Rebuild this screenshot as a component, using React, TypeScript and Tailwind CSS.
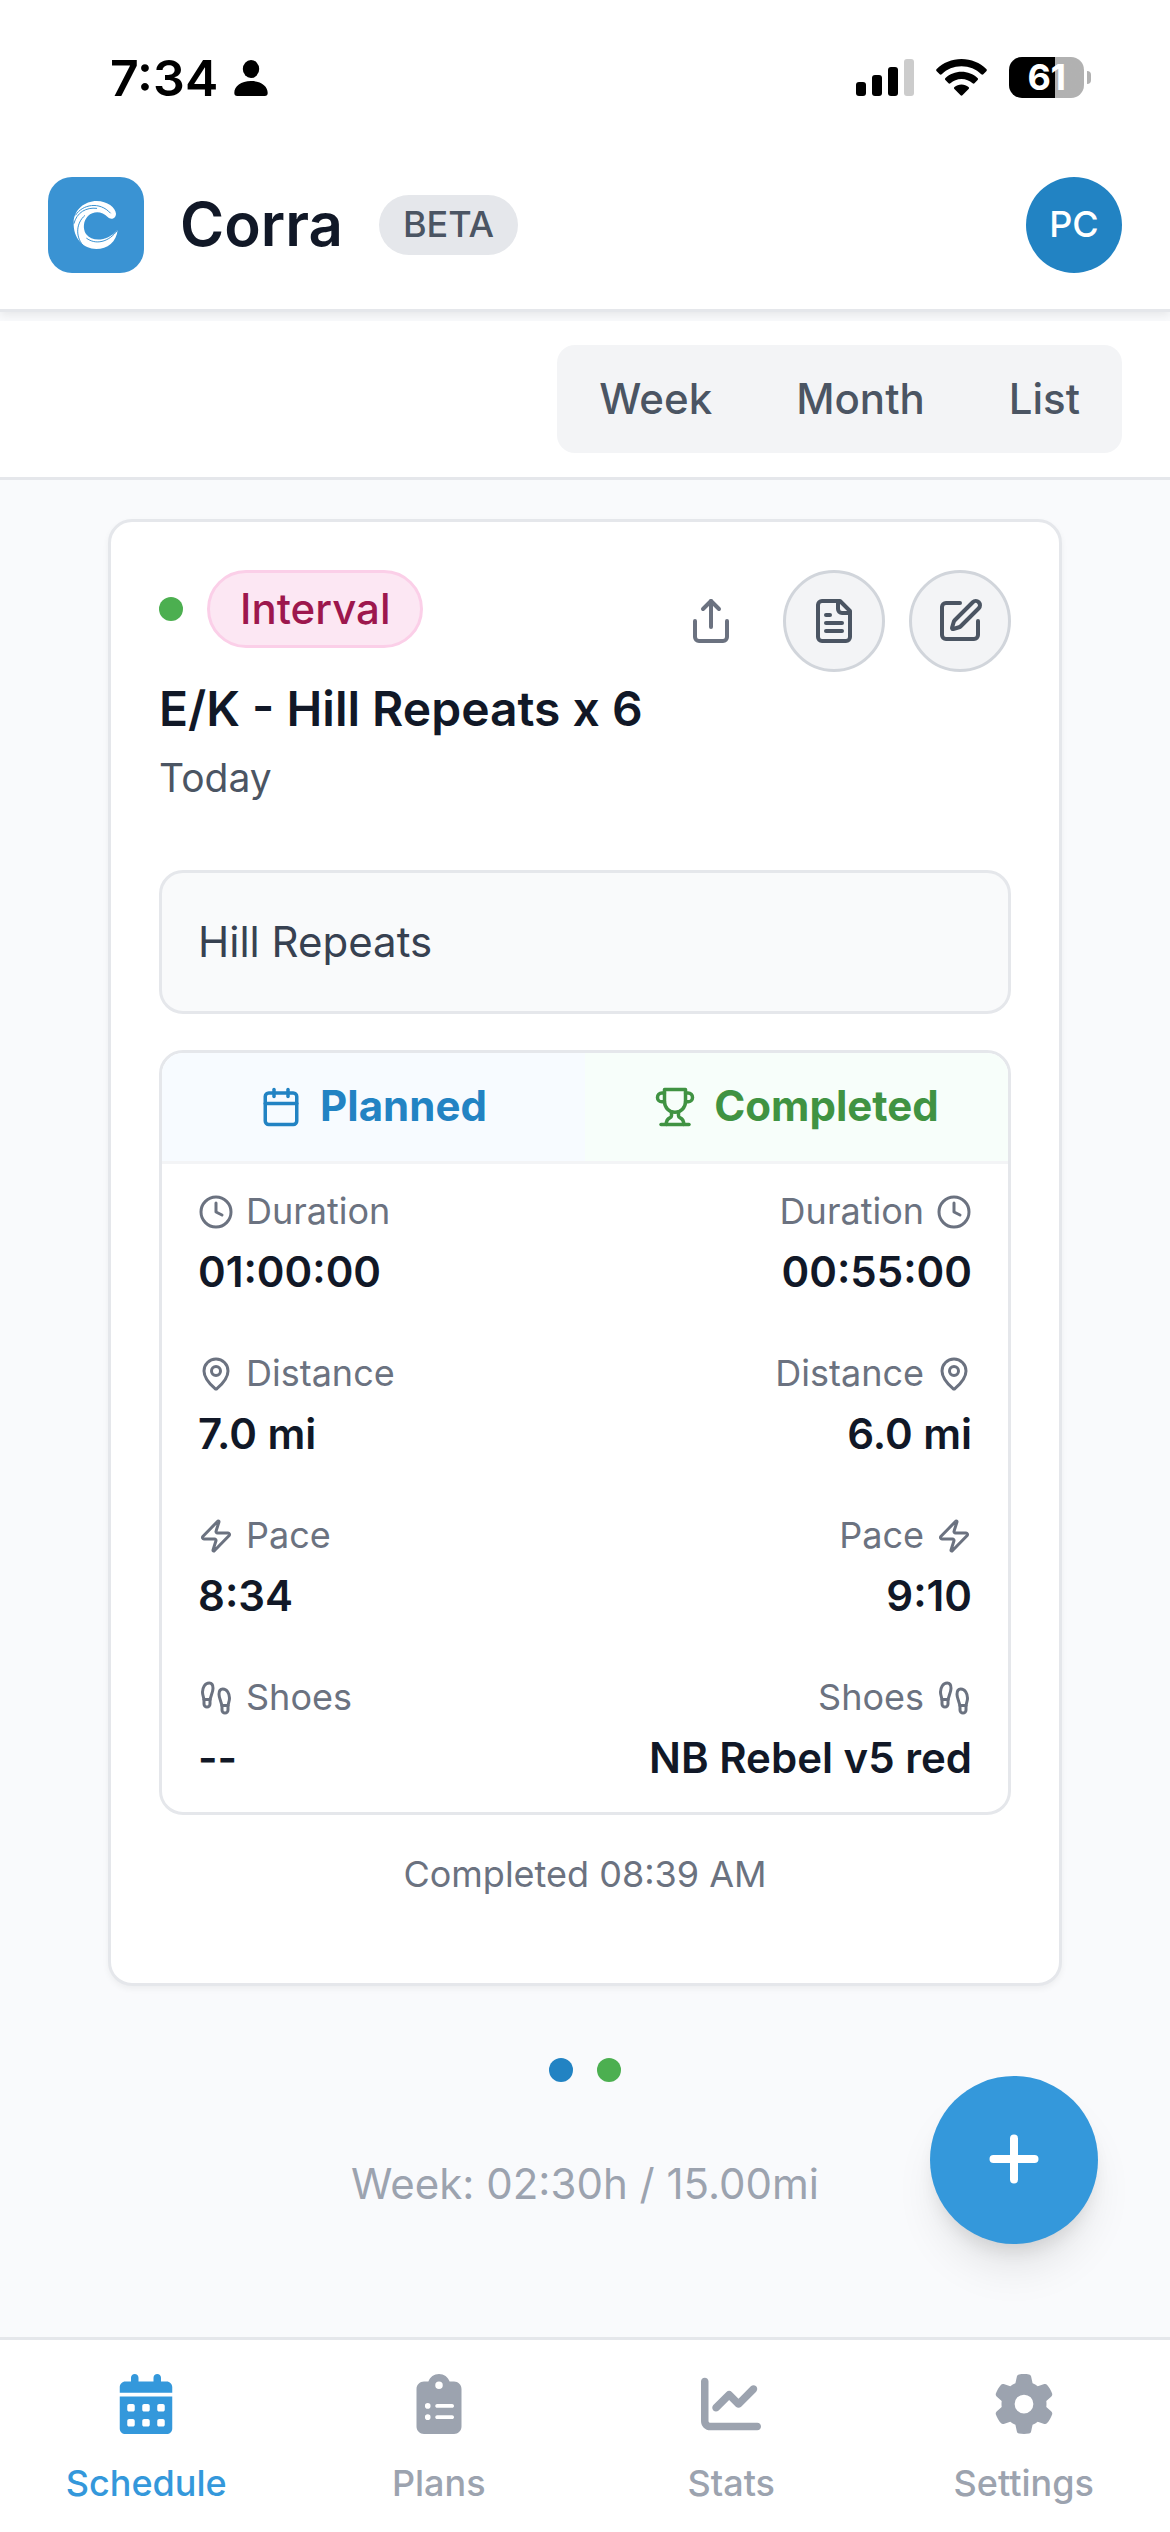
import React from "react";
import { Calendar, Clock, Footprints, MapPin, Zap } from "lucide-react";
import { FaCalendarDays, FaChartLine, FaClipboardList, FaGear } from "react-icons/fa6";

const metrics = [
  { label: "Duration", icon: Clock, planned: "01:00:00", completed: "00:55:00" },
  { label: "Distance", icon: MapPin, planned: "7.0 mi", completed: "6.0 mi" },
  { label: "Pace", icon: Zap, planned: "8:34", completed: "9:10" },
  { label: "Shoes", icon: Footprints, planned: "--", completed: "NB Rebel v5 red" }
];

const tabs = [
  { label: "Schedule", icon: FaCalendarDays, active: true },
  { label: "Plans", icon: FaClipboardList, active: false },
  { label: "Stats", icon: FaChartLine, active: false },
  { label: "Settings", icon: FaGear, active: false }
];

function StrokeIcon({ className, children }: { className: string; children: React.ReactNode }) {
  return (
    <svg
      viewBox="0 0 24 24"
      fill="none"
      stroke="currentColor"
      strokeWidth={2}
      strokeLinecap="round"
      strokeLinejoin="round"
      className={className}
    >
      {children}
    </svg>
  );
}

function StatusBar() {
  return (
    <div className="relative z-10 h-[141px] shrink-0 bg-white flex items-start justify-between pl-[110px] pr-[79px] text-black">
      <div className="flex items-center gap-[16px] pt-[48px] h-[108px]">
        <span className="text-[50px] leading-[60px] font-semibold">7:34</span>
        <svg viewBox="0 0 34 36" className="w-[34px] h-[36px]">
          <ellipse cx="17" cy="9" rx="8.2" ry="9" />
          <path d="M0.3 33C0.3 26 7 21 17 21s16.700 5 16.700 12c0 2-1 3-3 3H3.300c-2 0-3-1-3-3Z" />
        </svg>
      </div>
      <div className="flex items-center h-[41px] mt-[57px]">
        <svg viewBox="0 0 58 37" className="w-[58px] h-[37px]">
          <rect x="0" y="23" width="10" height="14" rx="3" />
          <rect x="16" y="16" width="10" height="21" rx="3" />
          <rect x="32" y="8" width="10" height="29" rx="3" />
          <rect x="48" y="0" width="10" height="37" rx="3" fill="#cccccc" />
        </svg>
        <svg viewBox="0 0 51 37" className="w-[51px] h-[37px] ml-[22px]">
          <path d="M25.500 0C15.800 0 7 3.800 0.700 10c-.7.700-.7 1.500 0 2.200l3 3c.6.600 1.400.6 2 0C10.900 10.200 17.800 7.300 25.500 7.300s14.600 2.900 19.800 7.900c.6.600 1.400.6 2 0l3-3c.7-.7.700-1.500 0-2.200C44 3.800 35.200 0 25.500 0Z" />
          <path d="M25.500 12.800c-6.200 0-11.800 2.300-16 6.200-.7.600-.7 1.500-.1 2.100l3.100 3.100c.6.600 1.300.6 1.900.1 3-2.600 6.800-4.200 11.100-4.200s8.100 1.600 11.100 4.200c.6.500 1.300.5 1.900-.1l3.100-3.100c.6-.6.600-1.500-.1-2.100-4.200-3.900-9.800-6.200-16-6.200Z" />
          <path d="M25.500 25.500c-2.700 0-5.100.9-7 2.500-.7.600-.7 1.400-.1 2l6.200 6.300c.6.600 1.200.6 1.800 0l6.200-6.300c.6-.6.600-1.400-.1-2-1.900-1.600-4.300-2.500-7-2.500Z" />
        </svg>
        <div className="ml-[22px] w-[75px] h-[41px] rounded-[13px] bg-linear-to-r from-black from-[61%] to-[#b1b1b1] to-[61%] flex items-center justify-center">
          <span className="text-[36px] leading-[41px] font-bold text-white tracking-[-0.5px]">61</span>
        </div>
        <div className="ml-[3px] w-[4px] h-[13px] rounded-r-full bg-[#b1b1b1]" />
      </div>
    </div>
  );
}

function Logo() {
  return (
    <svg viewBox="12 12 288 288" className="w-24 h-24 rounded-[24px] bg-[#3a93d3]" fill="none">
      <path
        fill="#fff"
        d="M89 148C90 110 122 84 158 84c32 0 57 20 58 38 0 14-15 20-25 10-16-17-42-19-59-3-14 14-16 38-6 54 20 25 64 23 95-13-3 36-31 58-64 58-39 0-70-32-68-80Z"
      />
      <g stroke="#3a93d3" strokeLinecap="round" strokeWidth="3">
        <path d="M95 126c20-32 72-42 104-6" />
        <path d="M90 151c8-32 36-49 68-45" />
        <path d="M122 128c-26 22-28 62-6 88" />
        <path d="M128 196c26 20 66 13 92-24" />
      </g>
    </svg>
  );
}

function Header() {
  return (
    <header className="h-[171px] shrink-0 bg-white border-b-[3px] border-gray-200 shadow-[0_3px_9px_rgba(0,0,0,0.08)] px-12 flex items-center justify-between">
      <div className="flex items-center">
        <Logo />
        <span className="ml-9 pb-[2px] text-[60px] leading-[72px] font-semibold text-[#111827]">Corra</span>
        <span className="ml-9 h-[60px] px-6 rounded-full bg-[#e5e7eb] text-[#4b5563] text-[36px] leading-[58px] font-medium">
          BETA
        </span>
      </div>
      <div className="w-24 h-24 pb-[2px] rounded-full bg-[#2283c3] text-white text-[36px] font-medium flex items-center justify-center">
        PC
      </div>
    </header>
  );
}

function ViewSwitch() {
  return (
    <div className="mt-[9px] h-[159px] shrink-0 bg-white border-b-[3px] border-gray-200 px-12 flex items-center justify-end">
      <div className="h-[108px] rounded-[18px] bg-[#f3f4f6] px-[6px] pb-[2px] flex items-center text-[42px] font-medium text-[#4b5563]">
        <button className="px-9">Week</button>
        <button className="px-[48px]">Month</button>
        <button className="px-9">List</button>
      </div>
    </div>
  );
}

function WorkoutCard() {
  return (
    <section className="mx-[108px] mt-[39px] h-[1467px] shrink-0 bg-white border-[3px] border-gray-200 rounded-[24px] shadow-[0_3px_6px_rgba(0,0,0,0.05)] p-12">
      <div className="flex items-start justify-between h-[102px]">
        <div className="flex items-center gap-6">
          <span className="w-6 h-6 rounded-full bg-[#4caf50]" />
          <span className="h-[78px] px-[30px] rounded-full border-[3px] border-[#fbcfe8] bg-[#fce7f3] text-[#9d174d] text-[42px] leading-[72px] font-medium">
            Interval
          </span>
        </div>
        <div className="flex items-center">
          <button className="w-24 h-24 flex items-center justify-center text-[#6b7280]">
            <StrokeIcon className="w-12 h-12">
              <path d="M4 12v8a2 2 0 0 0 2 2h12a2 2 0 0 0 2-2v-8" />
              <path d="m16 6-4-4-4 4" />
              <path d="M12 2v13" />
            </StrokeIcon>
          </button>
          <button className="ml-6 w-[102px] h-[102px] rounded-full border-[3px] border-[#d1d5db] bg-[#f3f4f6] text-[#4b5563] flex items-center justify-center">
            <StrokeIcon className="w-12 h-12">
              <path d="M15 2H6a2 2 0 0 0-2 2v16a2 2 0 0 0 2 2h12a2 2 0 0 0 2-2V7Z" />
              <path d="M14 2v4a2 2 0 0 0 2 2h4" />
              <path d="M10 9H8" />
              <path d="M16 13H8" />
              <path d="M16 17H8" />
            </StrokeIcon>
          </button>
          <button className="ml-6 w-[102px] h-[102px] rounded-full border-[3px] border-[#d1d5db] bg-[#f3f4f6] text-[#4b5563] flex items-center justify-center">
            <StrokeIcon className="w-12 h-12">
              <path d="M12 3H5a2 2 0 0 0-2 2v14a2 2 0 0 0 2 2h14a2 2 0 0 0 2-2v-7" />
              <path d="M18.375 2.625a1 1 0 0 1 3 3l-9.013 9.014a2 2 0 0 1-.853.505l-2.873.84a.5.5 0 0 1-.62-.62l.84-2.873a2 2 0 0 1 .506-.852z" />
            </StrokeIcon>
          </button>
        </div>
      </div>

      <h2 className="mt-[7px] text-[48px] leading-[60px] font-semibold text-[#111827]">E/K - Hill Repeats x 6</h2>
      <p className="mt-[9px] text-[39px] leading-[60px] text-[#4b5563]">Today</p>

      <div className="mt-[62px] h-[144px] rounded-[24px] border-[3px] border-gray-200 bg-[#f9fafb] px-9 pb-[2px] flex items-center text-[42px] text-[#374151]">
        Hill Repeats
      </div>

      <div className="mt-9 h-[765px] rounded-[24px] border-[3px] border-gray-200 overflow-hidden">
        <div className="grid grid-cols-2 h-[111px] border-b-[3px] border-[#f3f4f6] text-[42px] leading-[60px] font-bold">
          <div className="bg-[#f7fbff] text-[#2283c3] flex items-center justify-center gap-[18px]">
            <Calendar className="w-[42px] h-[42px]" />
            <span className="-mt-[2px]">Planned</span>
          </div>
          <div className="bg-[#f7fefa] text-[#409342] flex items-center justify-center gap-[18px]">
            <StrokeIcon className="w-[42px] h-[42px]">
              <path d="M6 9H4.500a2.500 2.500 0 0 1 0-5H6" />
              <path d="M18 9h1.500a2.500 2.500 0 0 0 0-5H18" />
              <path d="M4 22h16" />
              <path d="M10 14.660V17c0 .55-.47.980-.97 1.210C7.850 18.750 7 20.240 7 22" />
              <path d="M14 14.660V17c0 .55.470.980.970 1.210C16.150 18.750 17 20.240 17 22" />
              <path d="M18 2H6v7a6 6 0 0 0 12 0V2Z" />
            </StrokeIcon>
            <span className="-mt-[2px]">Completed</span>
          </div>
        </div>

        <div className="px-9 pt-[21px] flex flex-col gap-[45px]">
          {metrics.map(({ label, icon: Icon, planned, completed }) => (
            <div key={label} className="flex justify-between h-[117px]">
              <div>
                <div className="h-[54px] flex items-center gap-3 text-[36px] leading-[48px] text-[#6b7280]">
                  <Icon className="w-9 h-9" />
                  <span className="-mt-[2px]">{label}</span>
                </div>
                <div className="mt-[3px] text-[42px] leading-[60px] font-semibold text-[#111827]">{planned}</div>
              </div>
              <div className="text-right">
                <div className="h-[54px] flex items-center justify-end gap-3 text-[36px] leading-[48px] text-[#6b7280]">
                  <span className="-mt-[2px]">{label}</span>
                  <Icon className="w-9 h-9" />
                </div>
                <div className="mt-[3px] text-[42px] leading-[60px] font-semibold text-[#111827]">{completed}</div>
              </div>
            </div>
          ))}
        </div>
      </div>

      <p className="mt-[35px] text-center text-[36px] leading-[48px] text-[#6b7280]">Completed 08:39 AM</p>
    </section>
  );
}

function TabBar() {
  return (
    <nav className="h-[195px] shrink-0 bg-white border-t-[3px] border-gray-200 grid grid-cols-4 text-[36px] font-medium">
      {tabs.map(({ label, icon: Icon, active }) => (
        <button
          key={label}
          className={`flex flex-col items-center pt-[34px] ${active ? "text-[#3498db]" : "text-[#9ca3af]"}`}
        >
          <Icon className="w-[60px] h-[60px]" />
          <span className="mt-[25px] leading-[48px]">{label}</span>
        </button>
      ))}
    </nav>
  );
}

export default function App() {
  return (
    <div className="relative w-[1170px] h-[2532px] overflow-hidden bg-[#f9fafc] flex flex-col font-['Inter',sans-serif]">
      <StatusBar />
      <Header />
      <ViewSwitch />
      <WorkoutCard />

      <main className="flex-1 flex flex-col items-center pt-[72px]">
        <div className="flex gap-6">
          <span className="w-6 h-6 rounded-full bg-[#2283c3]" />
          <span className="w-6 h-6 rounded-full bg-[#4caf50]" />
        </div>
        <p className="mt-[72px] text-[42px] leading-[60px] text-[#9ca3af]">Week: 02:30h / 15.00mi</p>
      </main>

      <TabBar />

      {/* Floating add button */}
      <button className="absolute right-[72px] bottom-[288px] w-[168px] h-[168px] rounded-full bg-[#3498db] shadow-[0_30px_45px_-9px_rgba(0,0,0,0.1),0_12px_18px_-6px_rgba(0,0,0,0.1)] flex items-center justify-center pb-[3px]">
        <svg viewBox="0 0 50 50" className="w-[50px] h-[50px]" stroke="#fff" strokeWidth="8" strokeLinecap="round">
          <path d="M25 4.500v41M4.500 25h41" />
        </svg>
      </button>
    </div>
  );
}
